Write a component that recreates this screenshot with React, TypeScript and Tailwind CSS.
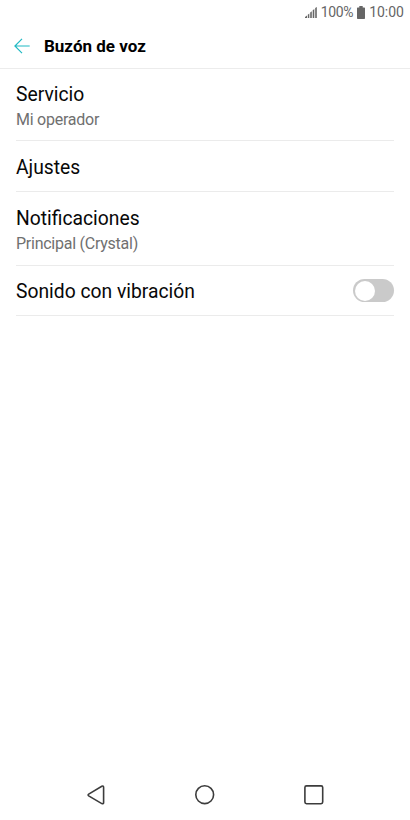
interface SettingProps {
  title: string
  summary?: string
  toggle?: boolean
  className: string
}

const settings: SettingProps[] = [
  { title: "Servicio", summary: "Mi operador", className: "h-[72px] pt-[4px]" },
  { title: "Ajustes", className: "h-[51px] pt-[4px]" },
  { title: "Notificaciones", summary: "Principal (Crystal)", className: "h-[74px] pt-[4px]" },
  { title: "Sonido con vibración", toggle: true, className: "h-[50px]" },
]

const StatusBar = () => (
  <div className="flex h-[25px] items-center justify-end pr-[6px] text-[14px] text-[#666666]">
    <svg className="mr-[4px] h-[11px] w-[12px]" viewBox="0 0 12 12" preserveAspectRatio="none" fill="#666666">
      <path d="M0 12V10.8L2 9.3V12ZM2.8 12V8.4L4.3 7V12ZM5.2 12V6L6.8 4.5V12ZM7.7 12V3.6L9.3 2.2V12ZM10.2 12V1.2L11.8 0V12Z" />
    </svg>
    <span className="tracking-[-0.4px]">100%</span>
    <svg className="mr-[4px] ml-[4px] h-[13px] w-[8px]" viewBox="0 0 8 13" fill="#666666">
      <path d="M2.3 0h3.4v1.4H7.3q.7 0 .7.7v10.2q0 .7-.7.7H.7Q0 13 0 12.3V2.1q0-.7.7-.7h1.6z" />
    </svg>
    <span>10:00</span>
  </div>
)

const Toggle = () => (
  <div className="flex h-[23px] w-[41px] items-center rounded-full bg-[#cacaca] p-[1.5px]">
    <div className="h-[20px] w-[20px] rounded-full bg-white" />
  </div>
)

const Setting = ({ title, summary, toggle, className }: SettingProps) => (
  <li className={`flex items-center justify-between border-b border-[#ebebeb] ${className}`}>
    <div className={toggle ? "pt-[3px]" : ""}>
      <p className="text-[19.3px] leading-[26px] text-[#080808]">{title}</p>
      {summary && <p className="text-[16px] leading-[24px] tracking-[-0.25px] text-[#707070]">{summary}</p>}
    </div>
    {toggle && <Toggle />}
  </li>
)

const NavBar = () => (
  <div className="flex h-[50px] items-center justify-between px-[86px] text-[#3c3c3c]">
    <svg className="h-[20px] w-[20px]" viewBox="0 0 20 20" fill="none" stroke="currentColor" strokeWidth="1.6">
      <path d="M2.7 9.1 15.8 1.2Q17.6.5 17.6 2.4V17.4Q17.6 19.3 15.8 18.6L2.7 10.9Q1.5 10 2.7 9.1Z" />
    </svg>
    <svg className="h-[20px] w-[20px]" viewBox="0 0 20 20" fill="none" stroke="currentColor" strokeWidth="1.6">
      <circle cx="9.7" cy="9.7" r="8.9" />
    </svg>
    <svg className="h-[20px] w-[20px]" viewBox="0 0 20 20" fill="none" stroke="currentColor" strokeWidth="1.6">
      <rect x="0.9" y="0.9" width="17.8" height="17.8" rx="1.6" />
    </svg>
  </div>
)

export default function App() {
  return (
    <div className="flex h-[820px] w-[410px] flex-col bg-white font-[Roboto,sans-serif]">
      <StatusBar />
      <header className="flex h-[44px] items-center border-b border-[#ececec] pb-px pl-[14px]">
        <svg className="h-[16px] w-[16px]" viewBox="0 0 16 16" fill="none" stroke="#20b9c3" strokeWidth="1.2">
          <path d="M8 .8.9 8 8 15.2M.9 8H15.7" />
        </svg>
        <h1 className="ml-[14px] text-[17px] leading-[24px] font-bold text-black">Buzón de voz</h1>
      </header>
      <ul className="mx-4 flex-1">
        {settings.map((item) => (
          <Setting key={item.title} {...item} />
        ))}
      </ul>
      <NavBar />
    </div>
  )
}
